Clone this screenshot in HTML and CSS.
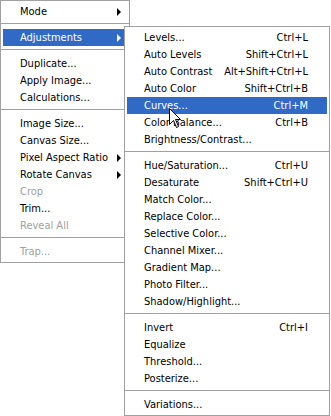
FILE: index.html
```html
<!DOCTYPE html>
<html>
<head>
    <title>Image Menu</title>
    <link rel="stylesheet" href="styles.css">
</head>
<body>
    <div class="stage">
        <div class="menu main-menu">
            <div class="item has-sub">Mode</div>
            <div class="sep"></div>
            <div class="item has-sub active">Adjustments</div>
            <div class="sep"></div>
            <div class="item">Duplicate...</div>
            <div class="item">Apply Image...</div>
            <div class="item">Calculations...</div>
            <div class="sep"></div>
            <div class="item">Image Size...</div>
            <div class="item">Canvas Size...</div>
            <div class="item has-sub">Pixel Aspect Ratio</div>
            <div class="item has-sub">Rotate Canvas</div>
            <div class="item disabled">Crop</div>
            <div class="item">Trim...</div>
            <div class="item disabled">Reveal All</div>
            <div class="sep"></div>
            <div class="item disabled">Trap...</div>
        </div>

        <div class="menu sub-menu">
            <div class="item"><span>Levels...</span><span class="key">Ctrl+L</span></div>
            <div class="item"><span>Auto Levels</span><span class="key">Shift+Ctrl+L</span></div>
            <div class="item"><span>Auto Contrast</span><span class="key">Alt+Shift+Ctrl+L</span></div>
            <div class="item"><span>Auto Color</span><span class="key">Shift+Ctrl+B</span></div>
            <div class="item active"><span>Curves...</span><span class="key">Ctrl+M</span></div>
            <div class="item"><span>Color Balance...</span><span class="key">Ctrl+B</span></div>
            <div class="item"><span>Brightness/Contrast...</span></div>
            <div class="sep"></div>
            <div class="item"><span>Hue/Saturation...</span><span class="key">Ctrl+U</span></div>
            <div class="item"><span>Desaturate</span><span class="key">Shift+Ctrl+U</span></div>
            <div class="item"><span>Match Color...</span></div>
            <div class="item"><span>Replace Color...</span></div>
            <div class="item"><span>Selective Color...</span></div>
            <div class="item"><span>Channel Mixer...</span></div>
            <div class="item"><span>Gradient Map...</span></div>
            <div class="item"><span>Photo Filter...</span></div>
            <div class="item"><span>Shadow/Highlight...</span></div>
            <div class="sep"></div>
            <div class="item"><span>Invert</span><span class="key">Ctrl+I</span></div>
            <div class="item"><span>Equalize</span></div>
            <div class="item"><span>Threshold...</span></div>
            <div class="item"><span>Posterize...</span></div>
            <div class="sep"></div>
            <div class="item"><span>Variations...</span></div>
        </div>

        <svg class="cursor" width="13" height="21" viewBox="0 0 13 21">
            <path d="M0.5 0.5 L0.5 16.5 L4.5 12.5 L7.5 19.5 L9.5 18.5 L6.5 11.5 L11.5 11.5 Z" fill="#fff" stroke="#000" stroke-width="1"/>
        </svg>
    </div>
</body>
</html>
```

FILE: styles.css
```css
body {
    margin: 0;
    background: #fff;
    font-family: "DejaVu Sans Condensed", "DejaVu Sans", sans-serif;
    font-size: 11px;
    color: #000;
}

.stage {
    position: relative;
    width: 331px;
    height: 416px;
}

.menu {
    box-sizing: border-box;
    background: #fff;
    border: 1px solid #a0a0a0;
    padding: 2px 0;
}

.main-menu {
    width: 130px;
}

.sub-menu {
    position: absolute;
    left: 124px;
    top: 26px;
    width: 206px;
}

.item {
    display: flex;
    justify-content: space-between;
    height: 17px;
    line-height: 17px;
    margin: 0 2px;
    padding: 0 19px 0 17px;
    white-space: nowrap;
}

.item.active {
    background: #316ac5;
    color: #fff;
}

.item.disabled {
    color: #a0a0a0;
}

.has-sub {
    position: relative;
}

.has-sub::after {
    content: "";
    position: absolute;
    right: 6px;
    top: 5px;
    border-left: 4px solid #000;
    border-top: 4px solid transparent;
    border-bottom: 4px solid transparent;
}

.has-sub.active::after {
    border-left-color: #fff;
}

.sep {
    height: 1px;
    background: #a0a0a0;
    margin: 3px 0 5px;
}

.cursor {
    position: absolute;
    left: 169px;
    top: 108px;
}
```
